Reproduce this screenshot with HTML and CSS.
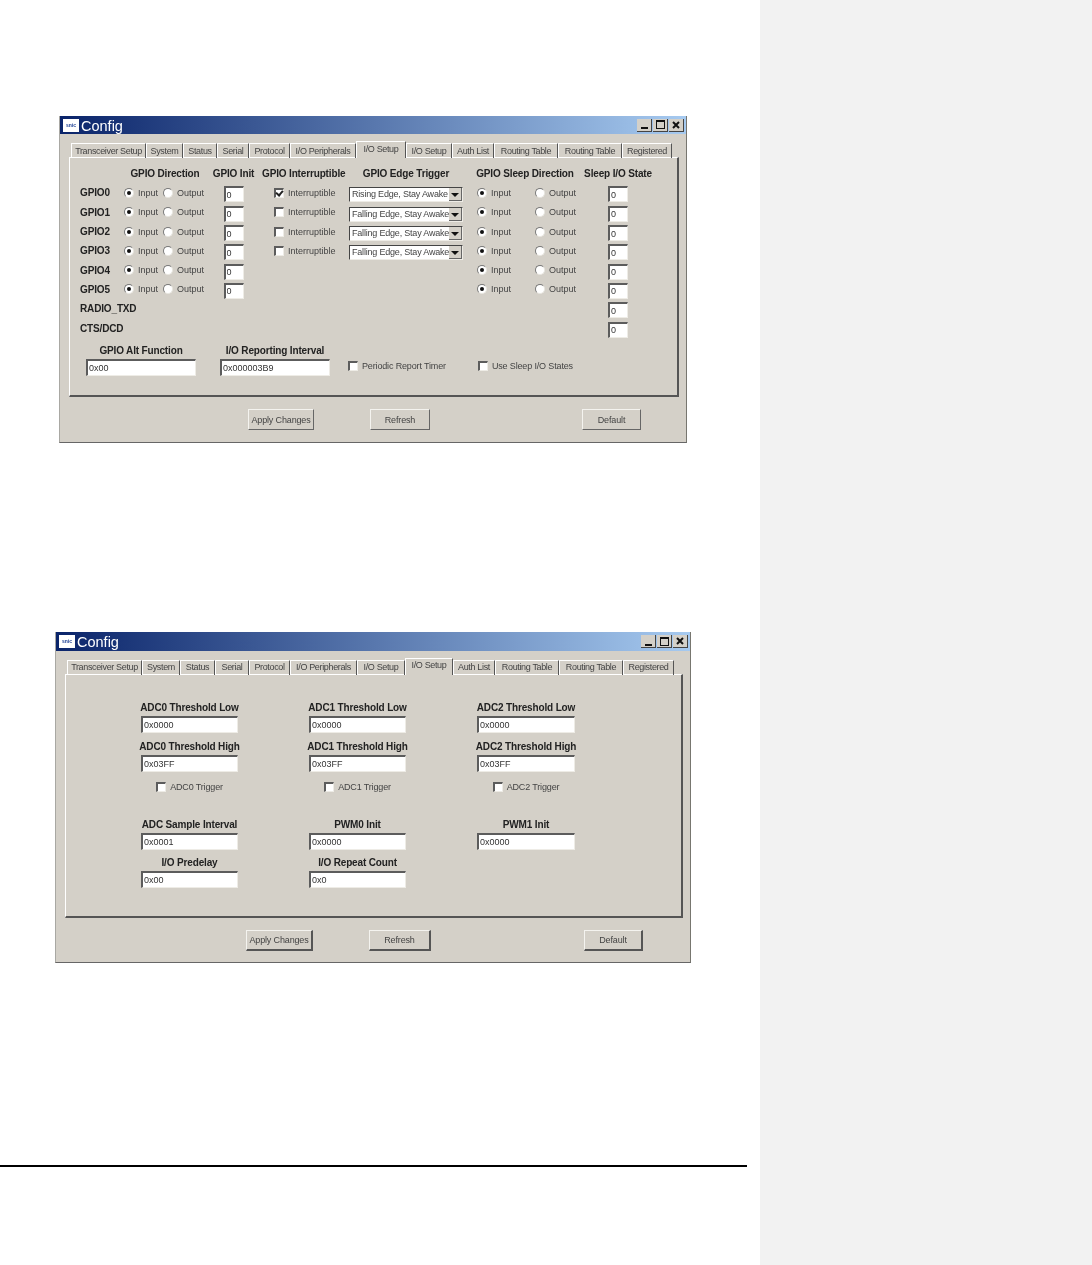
FILE: index.html
```html
<html lang="en">
<head>
    <title>Config</title>
    <link rel="stylesheet" href="styles.css">
</head>

<body>
<div class="page">
    <main class="sheet">

        <!-- I/O setup dialog -->
        <section class="win win-gpio">
            <div class="titlebar">
                <span class="logo">snic</span>
                <span class="title">Config</span>
                <span class="ctrls">
                    <span class="ctrl"><i class="g-min"></i></span>
                    <span class="ctrl"><i class="g-max"></i></span>
                    <span class="ctrl ctrl-x">
                        <svg width="8" height="8" viewBox="0 0 8 8"><path d="M1 1L7 7M7 1L1 7" stroke="#111" stroke-width="2"/></svg>
                    </span>
                </span>
            </div>

            <div class="tabs">
                <span class="tab">Transceiver Setup</span>
                <span class="tab">System</span>
                <span class="tab">Status</span>
                <span class="tab">Serial</span>
                <span class="tab">Protocol</span>
                <span class="tab">I/O Peripherals</span>
                <span class="tab active">I/O Setup</span>
                <span class="tab">I/O Setup</span>
                <span class="tab">Auth List</span>
                <span class="tab">Routing Table</span>
                <span class="tab">Routing Table</span>
                <span class="tab">Registered</span>
            </div>

            <div class="panel">
                <div class="gpio-grid">
                    <span></span>
                    <b class="head">GPIO Direction</b>
                    <b class="head">GPIO Init</b>
                    <b class="head">GPIO Interruptible</b>
                    <b class="head">GPIO Edge Trigger</b>
                    <b class="head">GPIO Sleep Direction</b>
                    <b class="head">Sleep I/O State</b>

                    <b>GPIO0</b>
                    <span class="dir"><label><input type="radio" name="d0" checked>Input</label><label><input type="radio" name="d0">Output</label></span>
                    <span class="cell"><input class="small" value="0"></span>
                    <label class="int"><input type="checkbox" checked>Interruptible</label>
                    <span class="cell cell-combo"><span class="combo"><span class="combo-text">Rising Edge, Stay Awake</span><span class="arrow"></span></span></span>
                    <span class="sleep"><label><input type="radio" name="s0" checked>Input</label><label><input type="radio" name="s0">Output</label></span>
                    <span class="cell"><input class="small" value="0"></span>

                    <b>GPIO1</b>
                    <span class="dir"><label><input type="radio" name="d1" checked>Input</label><label><input type="radio" name="d1">Output</label></span>
                    <span class="cell"><input class="small" value="0"></span>
                    <label class="int"><input type="checkbox">Interruptible</label>
                    <span class="cell cell-combo"><span class="combo"><span class="combo-text">Falling Edge, Stay Awake</span><span class="arrow"></span></span></span>
                    <span class="sleep"><label><input type="radio" name="s1" checked>Input</label><label><input type="radio" name="s1">Output</label></span>
                    <span class="cell"><input class="small" value="0"></span>

                    <b>GPIO2</b>
                    <span class="dir"><label><input type="radio" name="d2" checked>Input</label><label><input type="radio" name="d2">Output</label></span>
                    <span class="cell"><input class="small" value="0"></span>
                    <label class="int"><input type="checkbox">Interruptible</label>
                    <span class="cell cell-combo"><span class="combo"><span class="combo-text">Falling Edge, Stay Awake</span><span class="arrow"></span></span></span>
                    <span class="sleep"><label><input type="radio" name="s2" checked>Input</label><label><input type="radio" name="s2">Output</label></span>
                    <span class="cell"><input class="small" value="0"></span>

                    <b>GPIO3</b>
                    <span class="dir"><label><input type="radio" name="d3" checked>Input</label><label><input type="radio" name="d3">Output</label></span>
                    <span class="cell"><input class="small" value="0"></span>
                    <label class="int"><input type="checkbox">Interruptible</label>
                    <span class="cell cell-combo"><span class="combo"><span class="combo-text">Falling Edge, Stay Awake</span><span class="arrow"></span></span></span>
                    <span class="sleep"><label><input type="radio" name="s3" checked>Input</label><label><input type="radio" name="s3">Output</label></span>
                    <span class="cell"><input class="small" value="0"></span>

                    <b>GPIO4</b>
                    <span class="dir"><label><input type="radio" name="d4" checked>Input</label><label><input type="radio" name="d4">Output</label></span>
                    <span class="cell"><input class="small" value="0"></span>
                    <span></span>
                    <span></span>
                    <span class="sleep"><label><input type="radio" name="s4" checked>Input</label><label><input type="radio" name="s4">Output</label></span>
                    <span class="cell"><input class="small" value="0"></span>

                    <b>GPIO5</b>
                    <span class="dir"><label><input type="radio" name="d5" checked>Input</label><label><input type="radio" name="d5">Output</label></span>
                    <span class="cell"><input class="small" value="0"></span>
                    <span></span>
                    <span></span>
                    <span class="sleep"><label><input type="radio" name="s5" checked>Input</label><label><input type="radio" name="s5">Output</label></span>
                    <span class="cell"><input class="small" value="0"></span>

                    <b>RADIO_TXD</b>
                    <span></span><span></span><span></span><span></span><span></span>
                    <span class="cell"><input class="small" value="0"></span>

                    <b>CTS/DCD</b>
                    <span></span><span></span><span></span><span></span><span></span>
                    <span class="cell"><input class="small" value="0"></span>
                </div>

                <div class="gpio-bottom">
                    <div class="field field-wide">
                        <b>GPIO Alt Function</b>
                        <input value="0x00">
                    </div>
                    <div class="field field-wide">
                        <b>I/O Reporting Interval</b>
                        <input value="0x000003B9">
                    </div>
                    <label class="chk chk-timer"><input type="checkbox">Periodic Report Timer</label>
                    <label class="chk chk-sleep"><input type="checkbox">Use Sleep I/O States</label>
                </div>
            </div>

            <div class="footer">
                <button class="btn-apply">Apply Changes</button>
                <button class="btn-refresh">Refresh</button>
                <button class="btn-default">Default</button>
            </div>
        </section>

        <!-- ADC dialog -->
        <section class="win win-adc">
            <div class="titlebar">
                <span class="logo">snic</span>
                <span class="title">Config</span>
                <span class="ctrls">
                    <span class="ctrl"><i class="g-min"></i></span>
                    <span class="ctrl"><i class="g-max"></i></span>
                    <span class="ctrl ctrl-x">
                        <svg width="8" height="8" viewBox="0 0 8 8"><path d="M1 1L7 7M7 1L1 7" stroke="#111" stroke-width="2"/></svg>
                    </span>
                </span>
            </div>

            <div class="tabs">
                <span class="tab">Transceiver Setup</span>
                <span class="tab">System</span>
                <span class="tab">Status</span>
                <span class="tab">Serial</span>
                <span class="tab">Protocol</span>
                <span class="tab">I/O Peripherals</span>
                <span class="tab">I/O Setup</span>
                <span class="tab active">I/O Setup</span>
                <span class="tab">Auth List</span>
                <span class="tab">Routing Table</span>
                <span class="tab">Routing Table</span>
                <span class="tab">Registered</span>
            </div>

            <div class="panel">
                <div class="adc-grid">
                    <div class="field"><b>ADC0 Threshold Low</b><input value="0x0000"></div>
                    <div class="field"><b>ADC1 Threshold Low</b><input value="0x0000"></div>
                    <div class="field"><b>ADC2 Threshold Low</b><input value="0x0000"></div>

                    <div class="field"><b>ADC0 Threshold High</b><input value="0x03FF"></div>
                    <div class="field"><b>ADC1 Threshold High</b><input value="0x03FF"></div>
                    <div class="field"><b>ADC2 Threshold High</b><input value="0x03FF"></div>

                    <label class="chk trig"><input type="checkbox">ADC0 Trigger</label>
                    <label class="chk trig"><input type="checkbox">ADC1 Trigger</label>
                    <label class="chk trig"><input type="checkbox">ADC2 Trigger</label>

                    <div class="field"><b>ADC Sample Interval</b><input value="0x0001"></div>
                    <div class="field"><b>PWM0 Init</b><input value="0x0000"></div>
                    <div class="field"><b>PWM1 Init</b><input value="0x0000"></div>

                    <div class="field"><b>I/O Predelay</b><input value="0x00"></div>
                    <div class="field"><b>I/O Repeat Count</b><input value="0x0"></div>
                </div>
            </div>

            <div class="footer">
                <button class="btn-apply">Apply Changes</button>
                <button class="btn-refresh">Refresh</button>
                <button class="btn-default">Default</button>
            </div>
        </section>

        <hr class="rule">
    </main>

    <aside class="margin"></aside>
</div>
</body>
</html>
```

FILE: styles.css
```css
html, body {
    margin: 0;
    background: #fff;
}

body {
    font-family: "Liberation Sans", Arial, sans-serif;
    font-size: 9px;
    color: #444;
}

.page {
    display: flex;
    height: 1265px;
    overflow: hidden;
}

.sheet {
    width: 760px;
    padding-top: 116px;
    box-sizing: border-box;
}

.margin {
    flex: 1;
    background: #f2f2f2;
}

.rule {
    width: 747px;
    height: 2px;
    margin: 202px 0 0;
    border: 0;
    background: #000;
}

/* window */
.win {
    box-sizing: border-box;
    background: #d4d0c8;
    border-style: solid;
    border-width: 0 1px 1px 1px;
    border-color: #8a8a86 #77766f #666 #a9a8a3;
    filter: blur(0.4px);
}

.win-gpio {
    width: 628px;
    height: 327px;
    margin-left: 59px;
}

.win-adc {
    width: 636px;
    height: 331px;
    margin: 189px 0 0 55px;
}

.titlebar {
    display: flex;
    align-items: center;
    height: 18px;
    padding: 0 2px 0 3px;
    background: linear-gradient(to right, #0a246a, #a6caf0);
}

.win-adc .titlebar {
    height: 19px;
}

.logo {
    width: 16px;
    height: 13px;
    background: #fff;
    color: #1c3f94;
    font-size: 5px;
    font-weight: bold;
    line-height: 13px;
    text-align: center;
    overflow: hidden;
}

.title {
    margin-left: 2px;
    padding-top: 1px;
    color: #fff;
    font-size: 14.5px;
}

.ctrls {
    display: flex;
    gap: 1px;
    margin-left: auto;
}

.ctrl {
    display: flex;
    align-items: center;
    justify-content: center;
    width: 15px;
    height: 13px;
    background: #d4d0c8;
    border-right: 1px solid #444;
    border-bottom: 1px solid #444;
    box-sizing: border-box;
    position: relative;
}

.g-min {
    width: 7px;
    height: 2px;
    margin-top: 7px;
    background: #111;
}

.g-max {
    width: 9px;
    height: 9px;
    box-sizing: border-box;
    border: 1px solid #111;
    border-top-width: 2px;
}

/* tabs */
.tabs {
    display: grid;
    align-items: end;
    height: 24px;
    box-sizing: border-box;
    margin-bottom: -1px;
}

.win-gpio .tabs {
    grid-template-columns: 75px 37px 34px 32px 41px 66px 50px 46px 42px 64px 64px 50px;
    padding-left: 11px;
}

.win-adc .tabs {
    grid-template-columns: 75px 38px 35px 34px 41px 67px 48px 48px 42px 64px 64px 51px;
    padding-left: 11px;
}

.tab {
    height: 15px;
    box-sizing: border-box;
    border-top: 1px solid #fff;
    border-left: 1px solid #fff;
    border-right: 1px solid #555;
    line-height: 14px;
    text-align: center;
    letter-spacing: -0.35px;
    white-space: nowrap;
    overflow: hidden;
}

.win-adc .tab {
    line-height: 12px;
}

.tab.active {
    height: 17px;
    position: relative;
    background: #d4d0c8;
}

/* panel */
.panel {
    box-sizing: border-box;
    border-style: solid;
    border-width: 1px 2px 2px 1px;
    border-color: #fff #555 #555 #fff;
}

.win-gpio .panel {
    width: 610px;
    height: 240px;
    margin-left: 9px;
    padding: 6px 0 0 10px;
}

.win-adc .panel {
    width: 618px;
    height: 244px;
    margin-left: 9px;
    padding: 27px 0 0 75px;
}

b {
    color: #222;
    font-size: 10px;
    letter-spacing: -0.15px;
    white-space: nowrap;
}

/* gpio grid */
.gpio-grid {
    display: grid;
    grid-template-columns: 45px 80px 57px 83px 122px 116px 70px;
    grid-auto-rows: 19.3px;
    align-items: center;
}

.head {
    text-align: center;
}

.cell {
    display: flex;
    justify-content: center;
    padding-top: 3px;
}

.cell-combo {
    padding-top: 4px;
}

.dir,
.sleep {
    display: flex;
    align-items: center;
}

.dir {
    margin-left: -1px;
}

.dir label {
    display: flex;
    align-items: center;
    width: 39px;
}

.sleep label {
    display: flex;
    align-items: center;
    width: 58px;
    padding-left: 10px;
    box-sizing: border-box;
}

.int,
.chk {
    display: flex;
    align-items: center;
    white-space: nowrap;
}

.int {
    padding-left: 12px;
}

/* controls */
input {
    box-sizing: border-box;
    width: 100%;
    height: 17px;
    margin: 0;
    padding: 0 0 0 1px;
    background: #fff;
    color: #333;
    font-family: inherit;
    font-size: 9px;
    border-style: solid;
    border-width: 2px 1px 1px 2px;
    border-color: #5c5c5c #eeece6 #eeece6 #5c5c5c;
    border-radius: 0;
    outline: none;
}

input.small {
    width: 20px;
    height: 16px;
}

input[type="radio"],
input[type="checkbox"] {
    appearance: none;
    flex: none;
    width: 10px;
    height: 10px;
    margin: 0 4px 0 0;
    padding: 0;
    position: relative;
}

input[type="radio"] {
    border-radius: 50%;
    border-width: 1px;
    border-color: #777 #e8e6e0 #e8e6e0 #777;
}

input[type="radio"]:checked::after {
    content: "";
    position: absolute;
    left: 2px;
    top: 2px;
    width: 4px;
    height: 4px;
    border-radius: 50%;
    background: #111;
}

input[type="checkbox"]:checked::after {
    content: "";
    position: absolute;
    left: 1px;
    top: -1px;
    width: 3px;
    height: 5px;
    border: solid #222;
    border-width: 0 2px 2px 0;
    transform: rotate(40deg);
}

.combo {
    display: flex;
    box-sizing: border-box;
    width: 114px;
    height: 15px;
    background: #fff;
    border-style: solid;
    border-width: 1px;
    border-color: #444 #eeece6 #eeece6 #444;
}

.combo-text {
    flex: 1;
    padding-left: 2px;
    line-height: 13px;
    letter-spacing: -0.2px;
    white-space: nowrap;
    overflow: hidden;
}

.arrow {
    flex: none;
    width: 13px;
    background: #d4d0c8;
    border-right: 1px solid #666;
    border-bottom: 1px solid #666;
    box-sizing: border-box;
    position: relative;
}

.arrow::after {
    content: "";
    position: absolute;
    left: 2px;
    top: 5px;
    border: 4px solid transparent;
    border-top: 4px solid #111;
    border-bottom: 0;
}

/* fields */
.field {
    display: flex;
    flex-direction: column;
    align-items: center;
    gap: 2px;
}

.field b {
    line-height: 12px;
}

.gpio-bottom {
    display: flex;
    align-items: flex-end;
    margin-top: 7px;
    padding-left: 6px;
}

.field-wide {
    width: 110px;
    margin-right: 24px;
}

.chk {
    letter-spacing: -0.15px;
}

.chk-timer {
    height: 20px;
    margin-left: -6px;
}

.chk-sleep {
    height: 20px;
    margin-left: 32px;
}

/* adc grid */
.adc-grid {
    display: grid;
    grid-template-columns: 97px 97px 98px;
    column-gap: 71px;
    row-gap: 7.5px;
}

.trig {
    justify-content: center;
    height: 15px;
    margin-bottom: 17px;
}

/* footer */
.footer {
    display: flex;
    align-items: flex-start;
}

.win-gpio .footer {
    padding: 12px 0 0 188px;
}

.win-adc .footer {
    padding: 12px 0 0 190px;
}

button {
    height: 21px;
    padding: 0;
    background: #d4d0c8;
    color: #444;
    font-family: inherit;
    font-size: 9px;
    letter-spacing: -0.15px;
    border-style: solid;
    border-width: 1px;
    border-color: #f4f3ef #666 #666 #f4f3ef;
}

.win-adc button {
    border-width: 1px 2px 2px 1px;
    border-color: #f4f3ef #555 #555 #f4f3ef;
}

.btn-apply {
    width: 66px;
}

.btn-refresh {
    width: 60px;
    margin-left: 56px;
}

.btn-default {
    width: 59px;
    margin-left: 152px;
}

.win-adc .btn-apply {
    width: 67px;
}

.win-adc .btn-refresh {
    width: 62px;
}

.win-adc .btn-default {
    margin-left: 153px;
}
```
